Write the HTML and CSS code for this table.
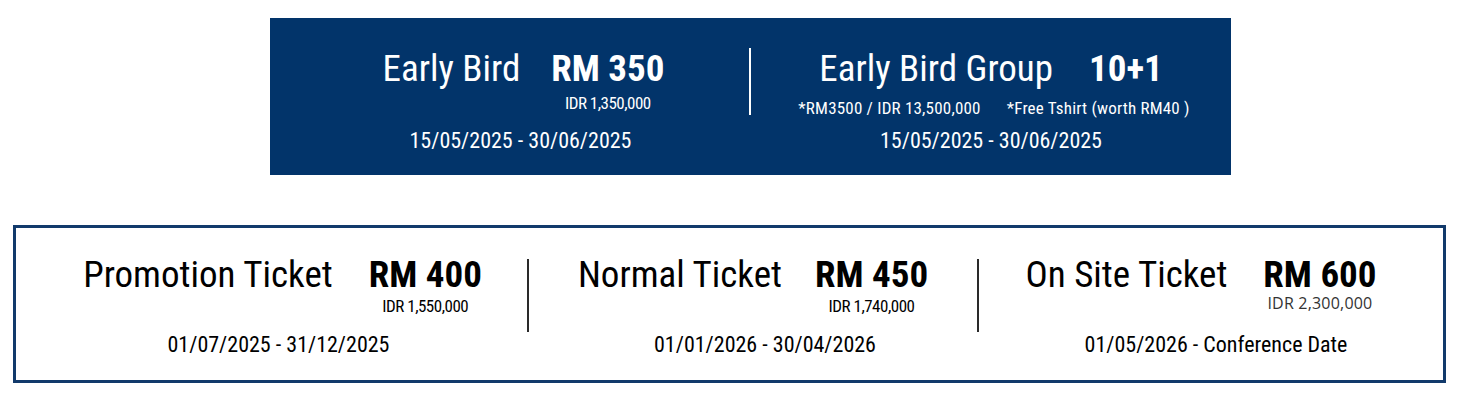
FILE: index.html
```html
<!DOCTYPE html>
<html lang="en">
<head>
<meta charset="utf-8">
<title>Ticket Prices</title>
<link rel="stylesheet" href="styles.css">
</head>
<body>
<main class="page">
  <section class="early">
    <div class="col col-early-a">
      <div class="title-row gap-a">
        <span class="name">Early Bird</span>
        <div class="price-block">
          <span class="price">RM 350</span>
          <span class="idr">IDR 1,350,000</span>
        </div>
      </div>
      <div class="date date-early">15/05/2025 - 30/06/2025</div>
    </div>
    <div class="vline vline-light"></div>
    <div class="col col-early-b">
      <div class="title-row">
        <span class="name">Early Bird Group</span>
        <span class="price">10+1</span>
      </div>
      <div class="note"><span>*RM3500 / IDR 13,500,000</span><span>*Free Tshirt (worth RM40 )</span></div>
      <div class="date date-group">15/05/2025 - 30/06/2025</div>
    </div>
  </section>

  <section class="regular">
    <div class="col col-r1">
      <div class="title-row">
        <span class="name">Promotion Ticket</span>
        <div class="price-block">
          <span class="price">RM 400</span>
          <span class="idr">IDR 1,550,000</span>
        </div>
      </div>
      <div class="date date-r1">01/07/2025 - 31/12/2025</div>
    </div>
    <div class="vline vline-dark"></div>
    <div class="col col-r2">
      <div class="title-row gap-r2">
        <span class="name">Normal Ticket</span>
        <div class="price-block">
          <span class="price">RM 450</span>
          <span class="idr">IDR 1,740,000</span>
        </div>
      </div>
      <div class="date date-r2">01/01/2026 - 30/04/2026</div>
    </div>
    <div class="vline vline-dark"></div>
    <div class="col col-r3">
      <div class="title-row">
        <span class="name">On Site Ticket</span>
        <div class="price-block">
          <span class="price">RM 600</span>
          <span class="idr idr-alt">IDR 2,300,000</span>
        </div>
      </div>
      <div class="date date-r3">01/05/2026 - Conference Date</div>
    </div>
  </section>
</main>
</body>
</html>
```

FILE: styles.css
```css
html, body {
  margin: 0;
  padding: 0;
  background: #ffffff;
}

.page {
  font-family: "Liberation Sans Narrow", "Roboto Condensed", "Liberation Sans", Arial, sans-serif;
  padding: 18px 0 0 0;
  display: flex;
  flex-direction: column;
}

.early {
  margin-left: 270px;
  width: 961px;
  height: 157px;
  background: #02346a;
  color: #ffffff;
  display: flex;
  align-items: flex-start;
}

.col {
  display: flex;
  flex-direction: column;
  align-items: center;
  padding-top: 32px;
  box-sizing: border-box;
}

.col-early-a {
  width: 479px;
  padding-left: 28px;
}

.col-early-b {
  width: 480px;
}

.title-row {
  display: flex;
  align-items: flex-start;
  gap: 36px;
}

.gap-a {
  gap: 31px;
}

.gap-r2 {
  gap: 33px;
}

.name {
  font-size: 37px;
  line-height: 37px;
  font-weight: 400;
}

.price {
  font-size: 37px;
  line-height: 37px;
  font-weight: 700;
}

.price-block {
  display: flex;
  flex-direction: column;
  align-items: center;
  height: 61px;
}

.idr {
  font-size: 17px;
  line-height: 17px;
  letter-spacing: -0.5px;
  margin-top: 8px;
}

.idr-alt {
  font-family: "Open Sans", "Noto Sans", sans-serif;
  font-size: 16px;
  line-height: 16px;
  letter-spacing: 0.2px;
  color: #333333;
}

.note {
  display: flex;
  gap: 26px;
  font-size: 17px;
  line-height: 17px;
  letter-spacing: 0.2px;
  margin-top: 13px;
  padding-left: 6px;
}

.date {
  font-size: 22px;
  line-height: 22px;
  margin-top: 19px;
}

.date-early {
  padding-right: 6px;
}

.date-group {
  margin-top: 13px;
}

.vline {
  width: 2px;
  flex: none;
}

.vline-light {
  background: #ffffff;
  margin-top: 30px;
  height: 67px;
}

.regular {
  margin: 50px 0 0 13px;
  width: 1433px;
  height: 158px;
  box-sizing: border-box;
  border: 3px solid #123a6b;
  color: #000000;
  display: flex;
  align-items: flex-start;
}

.regular .col {
  padding-top: 28px;
}

.regular .price-block {
  height: 58px;
}

.regular .idr {
  margin-top: 5px;
}

.regular .idr-alt {
  margin-top: 2px;
}

.regular .date {
  margin-top: 20px;
}

.vline-dark {
  background: #2a2a2a;
  margin-top: 31px;
  height: 73px;
}

.col-r1 {
  width: 511px;
  padding-left: 22px;
}

.date-r1 {
  padding-right: 8px;
}

.col-r2 {
  width: 448px;
}

.date-r2 {
  padding-left: 24px;
}

.col-r3 {
  width: 464px;
  padding-right: 20px;
}

.date-r3 {
  padding-left: 30px;
}
```
